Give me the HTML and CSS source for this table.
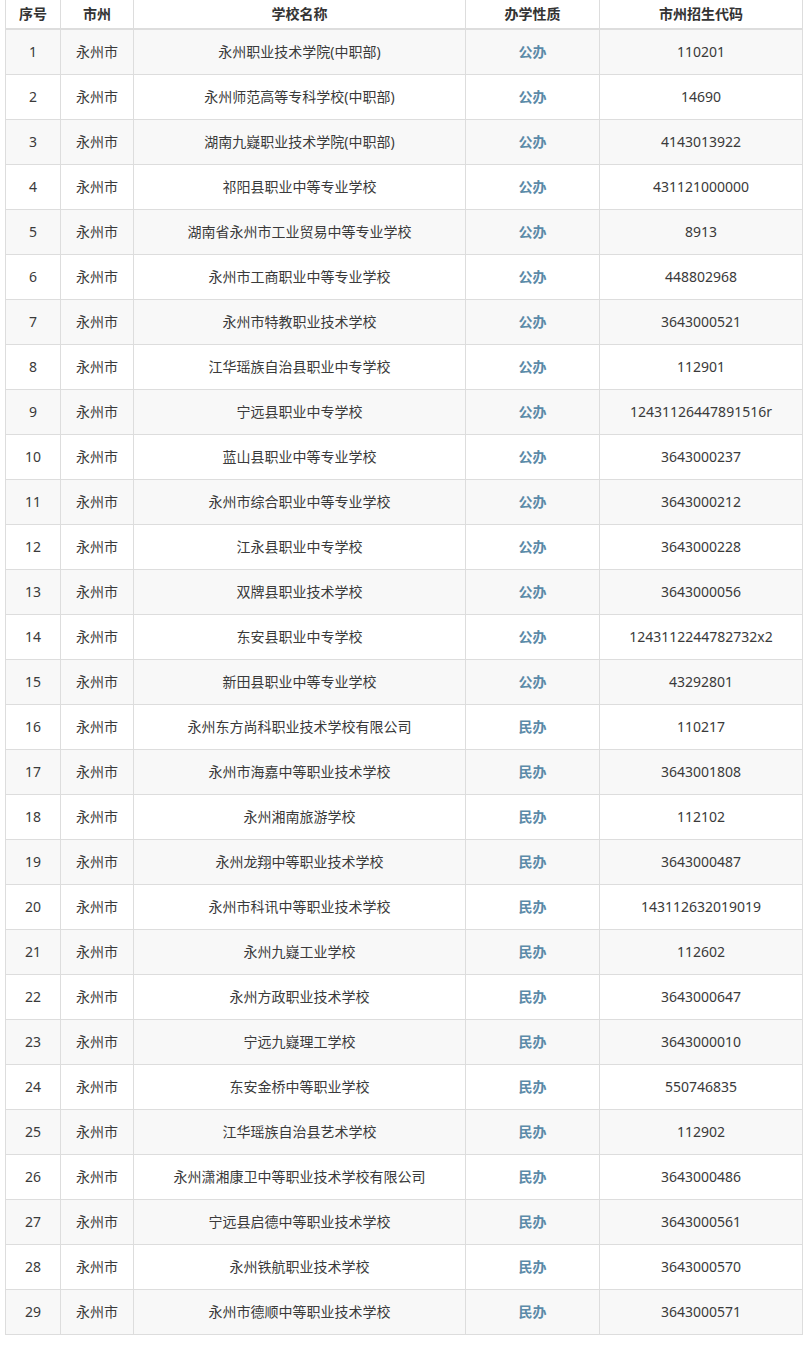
FILE: index.html
```html
<!DOCTYPE html>
<html lang="zh-CN">
<head>
<meta charset="utf-8">
<link rel="stylesheet" href="styles.css">
</head>
<body>
<table class="schools">
<colgroup>
<col class="c-no"><col class="c-city"><col class="c-name"><col class="c-type"><col class="c-code">
</colgroup>
<thead>
<tr><th>序号</th><th>市州</th><th>学校名称</th><th>办学性质</th><th>市州招生代码</th></tr>
</thead>
<tbody>
<tr><td>1</td><td>永州市</td><td>永州职业技术学院(中职部)</td><td class="type">公办</td><td>110201</td></tr>
<tr><td>2</td><td>永州市</td><td>永州师范高等专科学校(中职部)</td><td class="type">公办</td><td>14690</td></tr>
<tr><td>3</td><td>永州市</td><td>湖南九嶷职业技术学院(中职部)</td><td class="type">公办</td><td>4143013922</td></tr>
<tr><td>4</td><td>永州市</td><td>祁阳县职业中等专业学校</td><td class="type">公办</td><td>431121000000</td></tr>
<tr><td>5</td><td>永州市</td><td>湖南省永州市工业贸易中等专业学校</td><td class="type">公办</td><td>8913</td></tr>
<tr><td>6</td><td>永州市</td><td>永州市工商职业中等专业学校</td><td class="type">公办</td><td>448802968</td></tr>
<tr><td>7</td><td>永州市</td><td>永州市特教职业技术学校</td><td class="type">公办</td><td>3643000521</td></tr>
<tr><td>8</td><td>永州市</td><td>江华瑶族自治县职业中专学校</td><td class="type">公办</td><td>112901</td></tr>
<tr><td>9</td><td>永州市</td><td>宁远县职业中专学校</td><td class="type">公办</td><td>12431126447891516r</td></tr>
<tr><td>10</td><td>永州市</td><td>蓝山县职业中等专业学校</td><td class="type">公办</td><td>3643000237</td></tr>
<tr><td>11</td><td>永州市</td><td>永州市综合职业中等专业学校</td><td class="type">公办</td><td>3643000212</td></tr>
<tr><td>12</td><td>永州市</td><td>江永县职业中专学校</td><td class="type">公办</td><td>3643000228</td></tr>
<tr><td>13</td><td>永州市</td><td>双牌县职业技术学校</td><td class="type">公办</td><td>3643000056</td></tr>
<tr><td>14</td><td>永州市</td><td>东安县职业中专学校</td><td class="type">公办</td><td>1243112244782732x2</td></tr>
<tr><td>15</td><td>永州市</td><td>新田县职业中等专业学校</td><td class="type">公办</td><td>43292801</td></tr>
<tr><td>16</td><td>永州市</td><td>永州东方尚科职业技术学校有限公司</td><td class="type">民办</td><td>110217</td></tr>
<tr><td>17</td><td>永州市</td><td>永州市海嘉中等职业技术学校</td><td class="type">民办</td><td>3643001808</td></tr>
<tr><td>18</td><td>永州市</td><td>永州湘南旅游学校</td><td class="type">民办</td><td>112102</td></tr>
<tr><td>19</td><td>永州市</td><td>永州龙翔中等职业技术学校</td><td class="type">民办</td><td>3643000487</td></tr>
<tr><td>20</td><td>永州市</td><td>永州市科讯中等职业技术学校</td><td class="type">民办</td><td>143112632019019</td></tr>
<tr><td>21</td><td>永州市</td><td>永州九嶷工业学校</td><td class="type">民办</td><td>112602</td></tr>
<tr><td>22</td><td>永州市</td><td>永州方政职业技术学校</td><td class="type">民办</td><td>3643000647</td></tr>
<tr><td>23</td><td>永州市</td><td>宁远九嶷理工学校</td><td class="type">民办</td><td>3643000010</td></tr>
<tr><td>24</td><td>永州市</td><td>东安金桥中等职业学校</td><td class="type">民办</td><td>550746835</td></tr>
<tr><td>25</td><td>永州市</td><td>江华瑶族自治县艺术学校</td><td class="type">民办</td><td>112902</td></tr>
<tr><td>26</td><td>永州市</td><td>永州潇湘康卫中等职业技术学校有限公司</td><td class="type">民办</td><td>3643000486</td></tr>
<tr><td>27</td><td>永州市</td><td>宁远县启德中等职业技术学校</td><td class="type">民办</td><td>3643000561</td></tr>
<tr><td>28</td><td>永州市</td><td>永州铁航职业技术学校</td><td class="type">民办</td><td>3643000570</td></tr>
<tr><td>29</td><td>永州市</td><td>永州市德顺中等职业技术学校</td><td class="type">民办</td><td>3643000571</td></tr>
</tbody>
</table>
</body>
</html>
```
FILE: styles.css
```css
html, body {
  margin: 0;
  padding: 0;
  background: #ffffff;
}
body {
  font-family: "Noto Sans", "Noto Sans CJK SC", sans-serif;
  font-size: 14px;
  color: #333333;
}
.schools {
  margin-left: 5px;
  width: 797px;
  border-collapse: collapse;
  table-layout: fixed;
}
.c-no { width: 55px; }
.c-city { width: 73px; }
.c-name { width: 332px; }
.c-type { width: 134px; }
.c-code { width: 203px; }
.schools th,
.schools td {
  border-left: 1px solid #dddddd;
  border-right: 1px solid #dddddd;
  border-bottom: 1px solid #dddddd;
  text-align: center;
  vertical-align: middle;
  padding: 0;
  white-space: nowrap;
  line-height: 20px;
}
.schools th {
  height: 28px;
  font-weight: bold;
  color: #333333;
  border-bottom: 2px solid #dddddd;
}
.schools td {
  height: 44px;
  color: #3a3a3a;
}
.schools tbody tr:nth-child(odd) td {
  background: #f8f8f8;
}
.schools td.type {
  color: #5b8aa8;
  font-weight: bold;
}
```
